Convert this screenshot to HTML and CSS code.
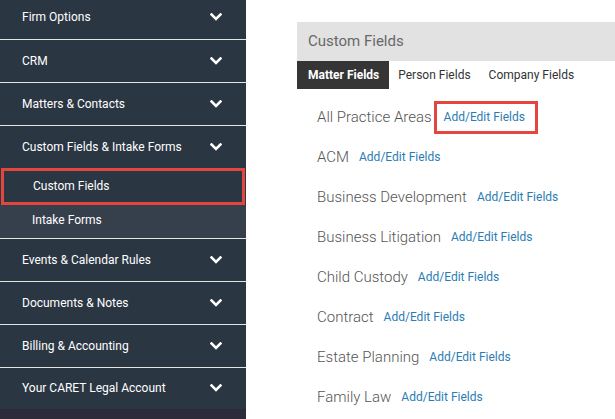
FILE: index.html
```html
<!DOCTYPE html>
<html>
<head>
<meta charset="utf-8">
<link rel="stylesheet" href="styles.css">
</head>
<body>
<div class="page">
  <nav class="sidebar">
    <div class="nav-row first"><span>Firm Options</span><svg class="chev" viewBox="0 0 12 8"><polyline points="1.5,1.5 6,6 10.5,1.5"/></svg></div>
    <div class="nav-row"><span>CRM</span><svg class="chev" viewBox="0 0 12 8"><polyline points="1.5,1.5 6,6 10.5,1.5"/></svg></div>
    <div class="nav-row"><span>Matters &amp; Contacts</span><svg class="chev" viewBox="0 0 12 8"><polyline points="1.5,1.5 6,6 10.5,1.5"/></svg></div>
    <div class="nav-group">
      <div class="nav-row open"><span>Custom Fields &amp; Intake Forms</span><svg class="chev" viewBox="0 0 12 8"><polyline points="1.5,1.5 6,6 10.5,1.5"/></svg></div>
      <div class="sub-item selected">Custom Fields</div>
      <div class="sub-item alt">Intake Forms</div>
    </div>
    <div class="nav-row"><span>Events &amp; Calendar Rules</span><svg class="chev" viewBox="0 0 12 8"><polyline points="1.5,1.5 6,6 10.5,1.5"/></svg></div>
    <div class="nav-row"><span>Documents &amp; Notes</span><svg class="chev" viewBox="0 0 12 8"><polyline points="1.5,1.5 6,6 10.5,1.5"/></svg></div>
    <div class="nav-row"><span>Billing &amp; Accounting</span><svg class="chev" viewBox="0 0 12 8"><polyline points="1.5,1.5 6,6 10.5,1.5"/></svg></div>
    <div class="nav-row last"><span>Your CARET Legal Account</span><svg class="chev" viewBox="0 0 12 8"><polyline points="1.5,1.5 6,6 10.5,1.5"/></svg></div>
  </nav>
  <main class="main">
    <div class="panel-title">Custom Fields</div>
    <div class="tabs">
      <div class="tab active">Matter Fields</div>
      <div class="tab">Person Fields</div>
      <div class="tab">Company Fields</div>
    </div>
    <ul class="areas">
      <li class="area"><span class="area-name">All Practice Areas</span><a class="link boxed">Add/Edit Fields</a></li>
      <li class="area"><span class="area-name">ACM</span><a class="link">Add/Edit Fields</a></li>
      <li class="area"><span class="area-name">Business Development</span><a class="link">Add/Edit Fields</a></li>
      <li class="area"><span class="area-name">Business Litigation</span><a class="link">Add/Edit Fields</a></li>
      <li class="area"><span class="area-name">Child Custody</span><a class="link">Add/Edit Fields</a></li>
      <li class="area"><span class="area-name">Contract</span><a class="link">Add/Edit Fields</a></li>
      <li class="area"><span class="area-name">Estate Planning</span><a class="link">Add/Edit Fields</a></li>
      <li class="area"><span class="area-name">Family Law</span><a class="link">Add/Edit Fields</a></li>
    </ul>
  </main>
</div>
</body>
</html>
```

FILE: styles.css
```css
* { box-sizing: border-box; }
html, body {
  margin: 0;
  padding: 0;
  background: #ffffff;
  font-family: Roboto, "Liberation Sans", sans-serif;
  overflow: hidden;
}
.page {
  display: flex;
  width: 615px;
  height: 419px;
}
.sidebar {
  width: 246px;
  flex: 0 0 246px;
  background: #2d2b3a;
  display: flex;
  flex-direction: column;
  margin-top: -4px;
  height: 423px;
}
.nav-row {
  height: 43px;
  display: flex;
  align-items: center;
  justify-content: space-between;
  padding: 0 24px 1px 22px;
  background: #2b3643;
  border-bottom: 1px solid #e4e4e4;
  color: #ffffff;
  font-size: 12px;
}
.nav-row.first { height: 44px; }
.nav-row.open { border-bottom: none; height: 42px; }
.nav-row.last { border-bottom: none; height: 41px; }
.chev {
  width: 12px;
  height: 8px;
  fill: none;
  stroke: #ffffff;
  stroke-width: 2.6;
  stroke-linecap: square;
}
.nav-group {
  display: flex;
  flex-direction: column;
  background: #2b3643;
  border-bottom: 1px solid #e4e4e4;
}
.sub-item {
  color: #ffffff;
  font-size: 12px;
  display: flex;
  align-items: center;
  padding-left: 32px;
}
.sub-item.selected {
  height: 37px;
  margin: 0 1px;
  padding-left: 29px;
  padding-bottom: 1px;
  border: 3px solid #e2463f;
  background: #2b3643;
}
.sub-item.alt {
  height: 33px;
  background: #36404d;
  padding-bottom: 3px;
}
.main {
  flex: 1;
  padding: 22px 0 0 51px;
}
.panel-title {
  height: 39px;
  background: #e2e2e2;
  color: #686868;
  font-size: 15px;
  display: flex;
  align-items: center;
  padding-left: 11px;
  padding-bottom: 1px;
}
.tabs {
  display: flex;
  height: 28px;
}
.tab {
  display: flex;
  align-items: center;
  padding: 0 9px;
  font-size: 12px;
  color: #333333;
}
.tab.active {
  background: #353535;
  color: #ffffff;
  font-weight: bold;
  padding: 0 10px 0 11px;
}
.areas {
  list-style: none;
  margin: 8px 0 0 0;
  padding: 0 0 0 20px;
}
.area {
  height: 40px;
  display: flex;
  align-items: center;
}
.area-name {
  font-size: 15px;
  font-weight: 300;
  color: #555555;
}
.link {
  font-size: 12px;
  font-weight: 400;
  color: #2a7db3;
  margin-left: 10px;
}
.link.boxed {
  margin-left: 2px;
  height: 33px;
  display: flex;
  align-items: center;
  padding: 0 10px 0 7px;
  border: 3px solid #e2463f;
}
```
